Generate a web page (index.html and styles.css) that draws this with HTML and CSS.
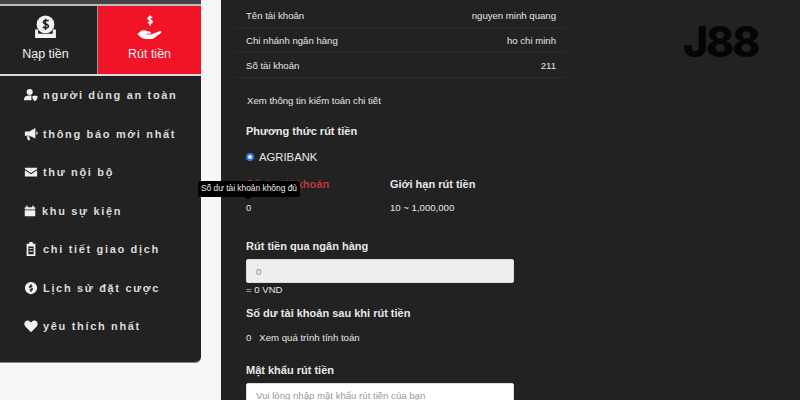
FILE: index.html
```html
<!DOCTYPE html>
<html lang="vi">
<head>
    <meta charset="UTF-8">
    <meta name="viewport" content="width=device-width, initial-scale=1.0">
    <title>J88 - Rút tiền</title>
    <link rel="stylesheet" href="styles.css">
</head>
<body>

    <div class="page">

        <!-- Menu trái -->
        <aside class="sidebar">
            <div class="top-strip"></div>
            <div class="tiles">
                <a class="tile">
                    <svg class="tile-icon" viewBox="0 0 24 24"><circle cx="12" cy="9" r="8.5" fill="#f2f2f2"/><path d="M15 5.8c-1-1-4.6-1.4-5 .8-.4 2.400 5 1.600 4.800 4.200-.2 2.200-4 1.900-5.300.6M12 3.500v11" fill="none" stroke="#222" stroke-width="1.500"/><path d="M2 14h3v4h14v-4h3v8H2z" fill="#f2f2f2"/></svg>
                    <span>Nạp tiền</span>
                </a>
                <a class="tile tile-red">
                    <svg class="tile-icon" viewBox="0 0 24 24"><path d="M14.500 2.600c-.8-.9-3.600-1-3.800.6-.2 1.800 3.900 1.200 3.800 3.200-.1 1.700-3 1.500-4 .5M12.500 .5v9.500" fill="none" stroke="#fff" stroke-width="1.500"/><path d="M.5 18.500c2.500-3.500 5-4.500 8-3.500l4 1c1.500.4 1.300 2-.2 2H9v.8h4.500l8-3.300c1.800-.6 2.800 1 1.200 2.100L15 23H7l-3-1.500z" fill="#fff"/></svg>
                    <span>Rút tiền</span>
                </a>
            </div>
            <nav class="menu">
                <a class="menu-item">
                    <svg class="menu-icon" viewBox="0 0 16 16"><circle cx="6.500" cy="4.500" r="3.500"/><path d="M0 14c0-4 2-5.500 6.500-5.500 1 0 1.500.1 2 .2V14z"/><path d="M9.500 9.500l3-1 3 1c0 3-1 4.500-3 5.500-2-1-3-2.500-3-5.500z"/></svg>
                    <span>người dùng an toàn</span>
                </a>
                <a class="menu-item">
                    <svg class="menu-icon" viewBox="0 0 16 16"><path d="M1 5h5l7-4v12L6 10H1z"/><path d="M3 10.500h3l1 4.500H4.500zM14 5.500h1.500v3H14z"/></svg>
                    <span>thông báo mới nhất</span>
                </a>
                <a class="menu-item">
                    <svg class="menu-icon" viewBox="0 0 16 16"><path d="M1 3h14v1.500L8 9 1 4.500z"/><path d="M1 6l7 4.500L15 6v7H1z"/></svg>
                    <span>thư nội bộ</span>
                </a>
                <a class="menu-item">
                    <svg class="menu-icon icon-narrow" viewBox="0 0 16 16"><path d="M3 1h2v2h6V1h2v2h2v3H1V3h2z"/><path d="M1 7h14v8H1z"/></svg>
                    <span>khu sự kiện</span>
                </a>
                <a class="menu-item">
                    <svg class="menu-icon" viewBox="0 0 16 16"><path fill-rule="evenodd" d="M6 0h4v2h3v14H3V2h3zM5 5v9h6V5z"/><path d="M6 7h4v1H6zM6 10h4v1H6z"/></svg>
                    <span>chi tiết giao dịch</span>
                </a>
                <a class="menu-item">
                    <svg class="menu-icon" viewBox="0 0 16 16"><path fill-rule="evenodd" d="M8 1a7 7 0 1 1 0 14A7 7 0 0 1 8 1zM7 4v1.200C5 6 5.500 8.500 8 8.500c1.500 0 1 1.500-1.500 .7v1.500l.5.100V12h2v-1.200c2-.8 1.500-3.300-1-3.300-1.500 0-1-1.500 1.500-.7V5.300L9 5.200V4z"/></svg>
                    <span>Lịch sử đặt cược</span>
                </a>
                <a class="menu-item">
                    <svg class="menu-icon" viewBox="0 0 16 16"><path d="M8 15L1.500 8.500C-1.500 5 2 0 6 2.200L8 4l2-1.800C14-.0 17.500 5 14.500 8.500z"/></svg>
                    <span>yêu thích nhất</span>
                </a>
            </nav>
        </aside>

        <!-- Nội dung -->
        <main class="content">
            <div class="info-table">
                <div class="info-row"><span>Tên tài khoản</span><span>nguyen minh quang</span></div>
                <div class="info-row"><span>Chi nhánh ngân hàng</span><span>ho chi minh</span></div>
                <div class="info-row"><span>Số tài khoản</span><span>211</span></div>
            </div>

            <p class="text link-audit">Xem thông tin kiểm toán chi tiết</p>

            <h3 class="title title-method">Phương thức rút tiền</h3>
            <div class="bank-option"><span class="radio"></span>AGRIBANK</div>

            <div class="limits">
                <div>
                    <h3 class="title title-red">Số dư tài khoản</h3>
                    <p class="text limit-value">0</p>
                </div>
                <div>
                    <h3 class="title">Giới hạn rút tiền</h3>
                    <p class="text limit-value">10 ~ 1,000,000</p>
                </div>
            </div>

            <h3 class="title title-amount">Rút tiền qua ngân hàng</h3>
            <input class="input-field input-disabled" type="text" value="0" disabled>
            <p class="text amount-note">= 0 VND</p>

            <h3 class="title title-after">Số dư tài khoản sau khi rút tiền</h3>
            <p class="text after-row"><span>0</span>Xem quá trình tính toán</p>

            <h3 class="title title-password">Mật khẩu rút tiền</h3>
            <input class="input-field" type="text" placeholder="Vui lòng nhập mật khẩu rút tiền của bạn">

            <div class="tooltip">Số dư tài khoản không đủ</div>
            <div class="logo">J88</div>
        </main>

    </div>

</body>
</html>
```

FILE: styles.css
```css
* {
    box-sizing: border-box;
}

html, body {
    margin: 0;
    height: 400px;
    overflow: hidden;
}

body {
    background-color: #f7f7f7;
    font-family: "Liberation Sans", Arial, sans-serif;
    color: #e6e6e6;
}

.page {
    display: flex;
    gap: 20px;
    height: 400px;
}

.sidebar {
    width: 201px;
    flex-shrink: 0;
    align-self: flex-start;
}

.top-strip {
    height: 6px;
    background-color: #444;
    border-bottom: 2px solid #bdbdbd;
}

.tiles {
    display: flex;
    height: 70px;
    border-bottom: 2px solid #d8d8d8;
}

.tile {
    display: flex;
    flex-direction: column;
    align-items: center;
    width: 98px;
    padding: 9px 6px 0 0;
    background-color: #222;
    border-right: 1px solid #999;
    color: #f0f0f0;
    font-size: 12.5px;
}

.tile span {
    margin-top: 6px;
    line-height: 16px;
}

.tile-red {
    flex: 1;
    padding-right: 0;
    background-color: #f11427;
    border-right: none;
}

.tile-icon {
    width: 25px;
    height: 25px;
}

.menu {
    height: 287px;
    background-color: #222;
    border-bottom: 1px solid #888;
    border-bottom-right-radius: 6px;
}

.menu-item {
    display: flex;
    align-items: center;
    gap: 5px;
    height: 38.5px;
    padding-left: 24px;
    font-size: 11px;
    font-weight: bold;
    letter-spacing: 1.67px;
    color: #dcdcdc;
}

.menu-icon {
    width: 14px;
    height: 14px;
    flex-shrink: 0;
    fill: #f0f0f0;
}

.icon-narrow {
    width: 12px;
    margin-right: 1px;
}

.content {
    position: relative;
    flex: 1;
    padding: 3px 0 0 25px;
    background-color: #222;
}

.info-table {
    width: 332px;
    margin-left: -11px;
}

.info-row {
    display: flex;
    justify-content: space-between;
    align-items: center;
    height: 25px;
    padding: 0 11px;
    border-bottom: 1px solid #2c2c2c;
    font-size: 9.6px;
}

.text {
    margin: 0;
    font-size: 9.6px;
    line-height: 14px;
}

.title {
    margin: 0;
    font-size: 11px;
    line-height: 14px;
    font-weight: bold;
    color: #e8e8e8;
}

.title-red {
    color: #b9393c;
}

.link-audit {
    margin: 16px 0 0 1px;
}

.title-method {
    margin-top: 16px;
}

.bank-option {
    display: flex;
    align-items: center;
    gap: 5px;
    margin-top: 12px;
    font-size: 11.3px;
    line-height: 14px;
}

.radio {
    width: 8px;
    height: 8px;
    border-radius: 50%;
    background-color: #dfeaff;
    border: 2px solid #2a7de1;
}

.limits {
    display: grid;
    grid-template-columns: 144px 1fr;
    margin-top: 13px;
}

.limit-value {
    margin-top: 10px;
}

.title-amount {
    margin-top: 24px;
}

.input-field {
    display: block;
    width: 268px;
    height: 24px;
    margin-top: 6px;
    padding: 0 9px;
    background-color: #fff;
    border: 1px solid #ddd;
    border-radius: 2px;
    font-family: inherit;
    font-size: 9.6px;
}

.input-field::placeholder {
    color: #999;
}

.input-disabled {
    background-color: #eee;
    color: #888;
}

.amount-note {
    line-height: 13px;
}

.title-after {
    margin-top: 10px;
}

.after-row {
    display: flex;
    gap: 8px;
    margin-top: 11px;
}

.title-password {
    margin-top: 18px;
}

.tooltip {
    position: absolute;
    left: -23px;
    top: 181px;
    width: 102px;
    height: 16px;
    background-color: #000;
    border-radius: 2px;
    color: #eee;
    font-size: 8.4px;
    line-height: 15px;
    text-align: center;
    white-space: nowrap;
}

.tooltip::after {
    content: "";
    position: absolute;
    left: 47px;
    top: 16px;
    border: 3px solid transparent;
    border-top-color: #000;
    border-bottom: none;
}

.logo {
    position: absolute;
    left: 462px;
    top: 16px;
    font-family: Inter, sans-serif;
    font-size: 43px;
    font-weight: 800;
    line-height: 50px;
    letter-spacing: -2.5px;
    color: #050505;
}
```
